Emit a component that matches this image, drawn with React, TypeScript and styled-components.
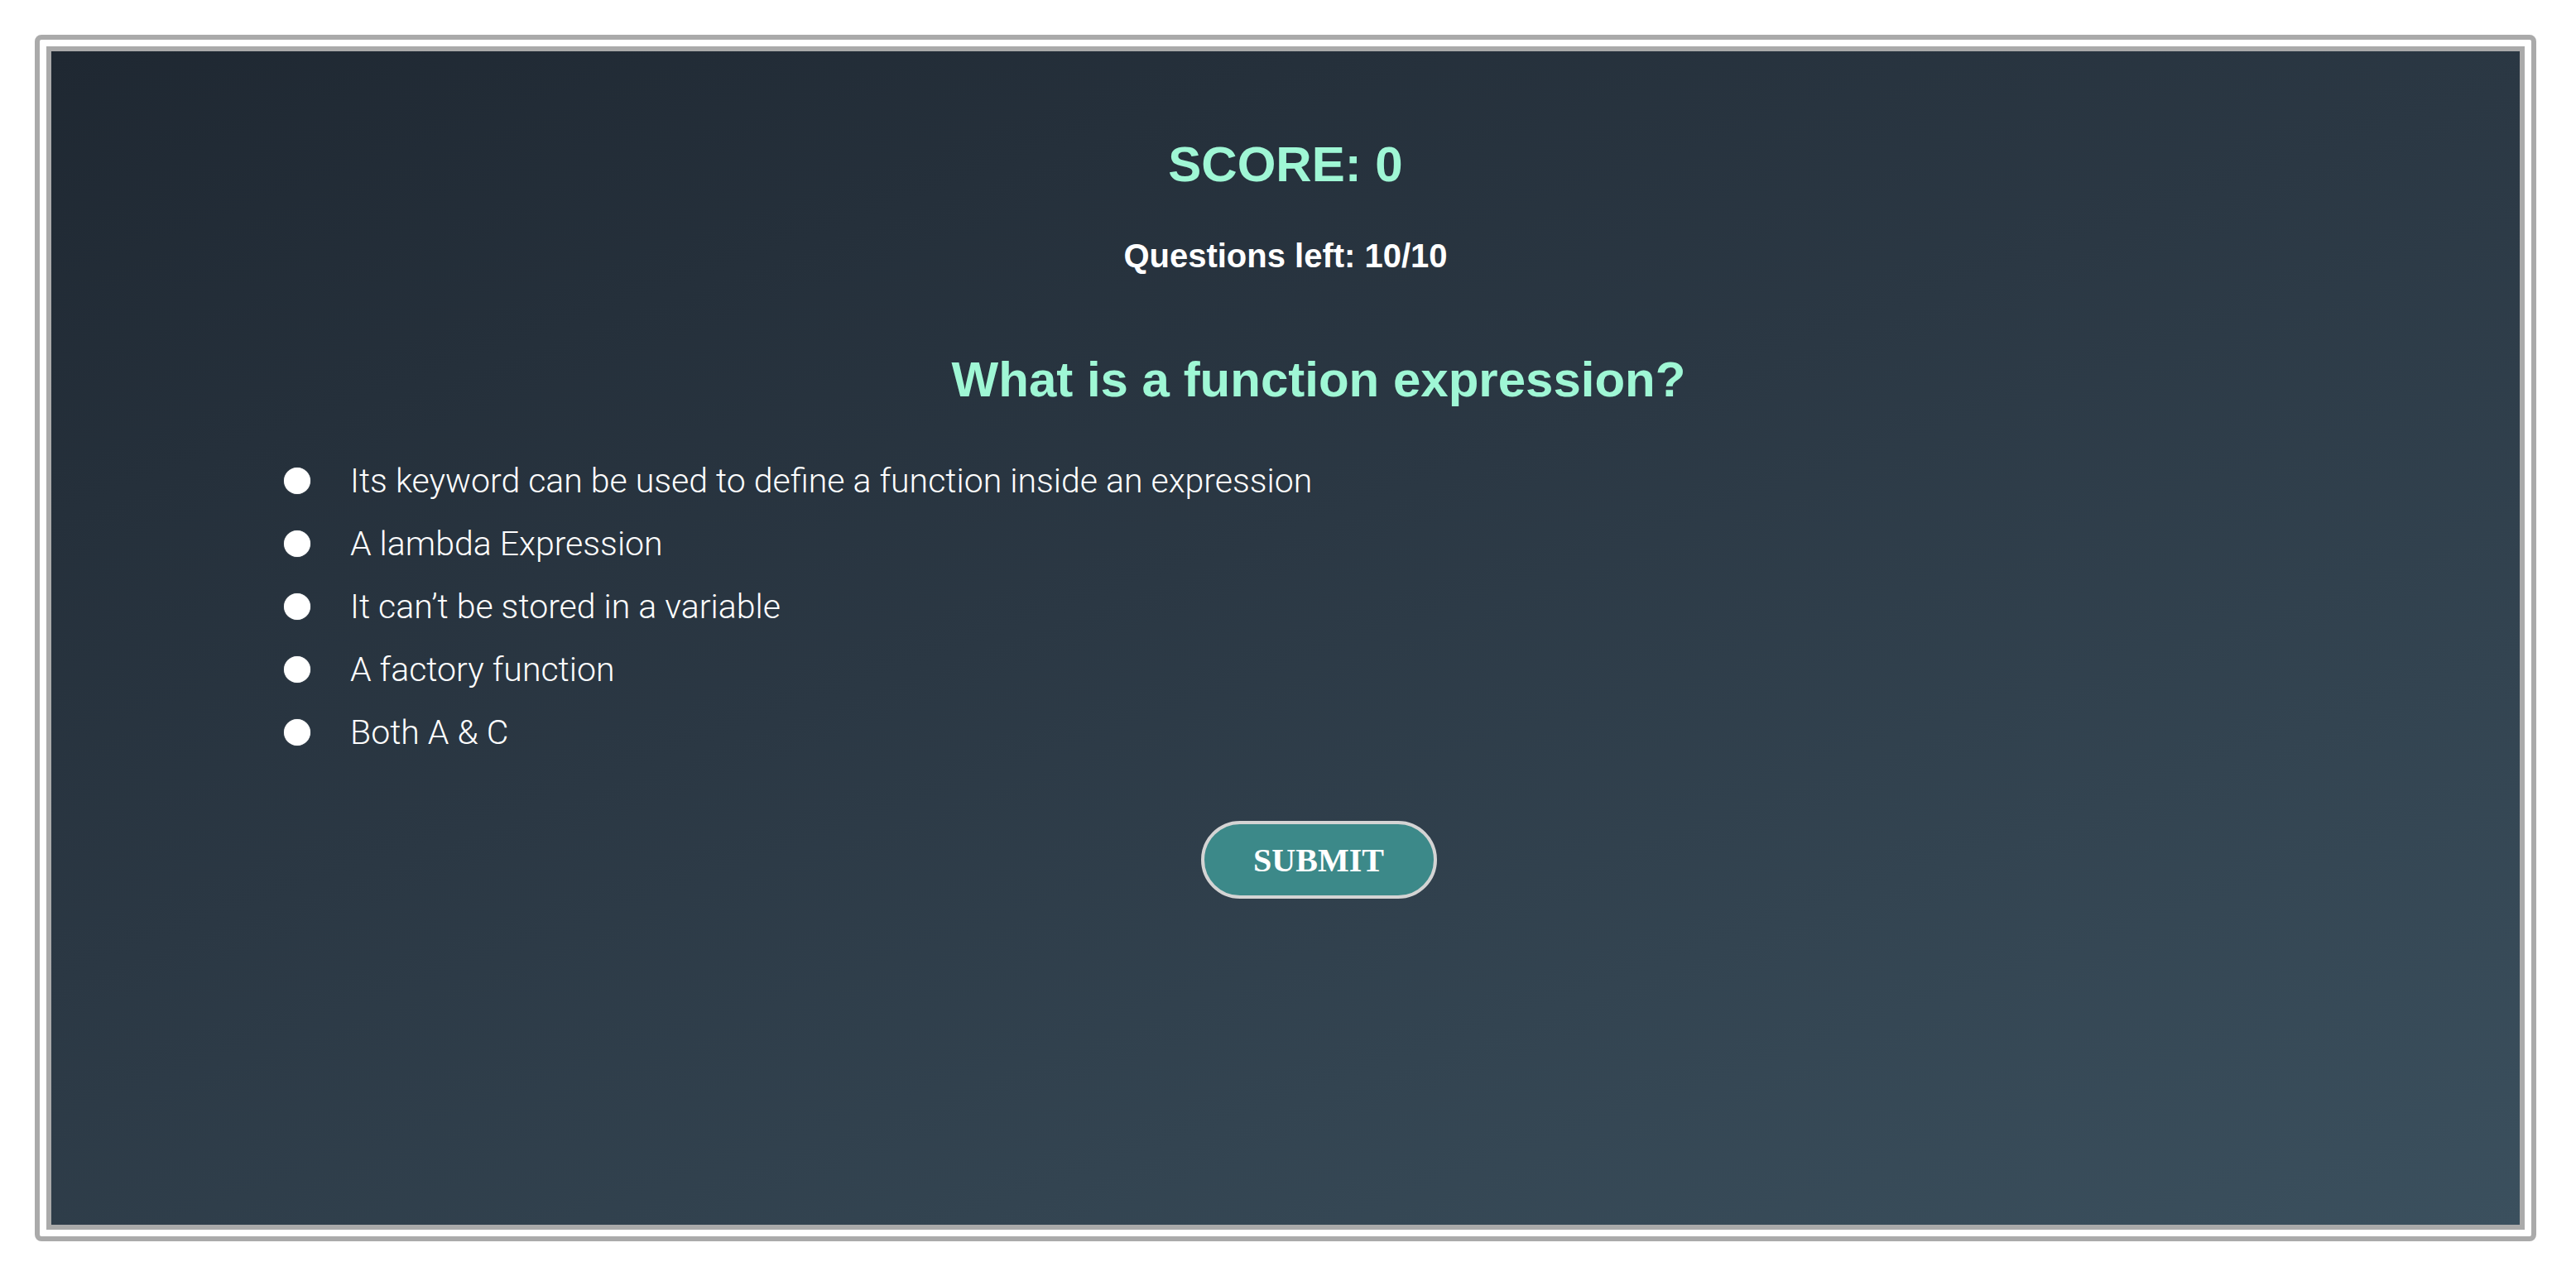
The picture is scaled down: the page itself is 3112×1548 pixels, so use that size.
import React, { useState } from "react";
import styled, { createGlobalStyle } from "styled-components";

// Estilos globais
const GlobalStyle = createGlobalStyle`
  html, body {
    margin: 0;
    padding: 0;
    background: #ffffff;
    font-family: "Liberation Sans", Arial, Helvetica, sans-serif;
  }
`;

// Moldura externa (borda cinza com cantos arredondados)
const Frame = styled.div`
  box-sizing: border-box;
  margin: 42px 0 0 42px;
  width: 3022px;
  height: 1458px;
  padding: 8px;
  border: 6px solid #aaaaaa;
  border-radius: 8px;
  background: #ffffff;
`;

// Painel com gradiente
const Panel = styled.main`
  box-sizing: border-box;
  height: 100%;
  border: 6px solid #aaaaaa;
  background: linear-gradient(160deg, #1f2832 0%, #2b3844 45%, #3b505e 100%);
  padding-top: 102px;
  color: #ffffff;
`;

const Score = styled.h1`
  margin: 0;
  text-align: center;
  font-size: 60px;
  line-height: 69px;
  font-weight: 700;
  color: #9ff7d5;
`;

const Remaining = styled.p`
  margin: 53px 0 0;
  text-align: center;
  font-size: 40px;
  line-height: 46px;
  font-weight: 700;
  color: #ffffff;
`;

// Área do quiz (deslocada à direita como no original)
const Quiz = styled.form`
  padding-left: 80px;
`;

const Question = styled.h2`
  margin: 92px 0 0;
  text-align: center;
  font-size: 60px;
  line-height: 69px;
  font-weight: 700;
  color: #9ff7d5;
`;

const Options = styled.ul`
  list-style: none;
  margin: 65px 0 0;
  padding: 0 0 0 201px;
  display: flex;
  flex-direction: column;
  gap: 30px;
`;

const Option = styled.li`
  display: flex;
  align-items: center;
  gap: 48px;
  height: 46px;
`;

const Radio = styled.input`
  appearance: none;
  margin: 0;
  width: 32px;
  height: 32px;
  border-radius: 50%;
  background: #ffffff;
  box-shadow: 0 0 1px rgba(255, 255, 255, 0.6);
  cursor: pointer;

  &:checked {
    background: radial-gradient(circle, #3c8989 0 7px, #ffffff 8px);
  }
`;

const Label = styled.label`
  font-family: Roboto, "Liberation Sans", Arial, sans-serif;
  font-weight: 300;
  font-size: 41px;
  line-height: 46px;
  color: #ffffff;
  cursor: pointer;
`;

const Actions = styled.div`
  display: flex;
  justify-content: center;
  margin-top: 84px;
`;

const SubmitButton = styled.button`
  box-sizing: border-box;
  width: 285px;
  height: 94px;
  border: 4px solid #d4d4d4;
  border-radius: 47px;
  background: #3c8989;
  color: #ffffff;
  font-family: "Liberation Serif", "Times New Roman", serif;
  font-weight: 700;
  font-size: 40px;
  cursor: pointer;
`;

const answers = [
  "Its keyword can be used to define a function inside an expression",
  "A lambda Expression",
  "It can’t be stored in a variable",
  "A factory function",
  "Both A & C",
];

const App: React.FC = () => {
  const [selected, setSelected] = useState<number | null>(null);

  return (
    <React.Fragment>
      <GlobalStyle />
      <Frame>
        <Panel>
          <Score>SCORE: 0</Score>
          <Remaining>Questions left: 10/10</Remaining>
          <Quiz onSubmit={(e) => e.preventDefault()}>
            <Question>What is a function expression?</Question>
            <Options>
              {answers.map((text, i) => (
                <Option key={i}>
                  <Radio
                    type="radio"
                    name="answer"
                    id={`answer-${i}`}
                    checked={selected === i}
                    onChange={() => setSelected(i)}
                  />
                  <Label htmlFor={`answer-${i}`}>{text}</Label>
                </Option>
              ))}
            </Options>
            <Actions>
              <SubmitButton type="submit">SUBMIT</SubmitButton>
            </Actions>
          </Quiz>
        </Panel>
      </Frame>
    </React.Fragment>
  );
};

export default App;
